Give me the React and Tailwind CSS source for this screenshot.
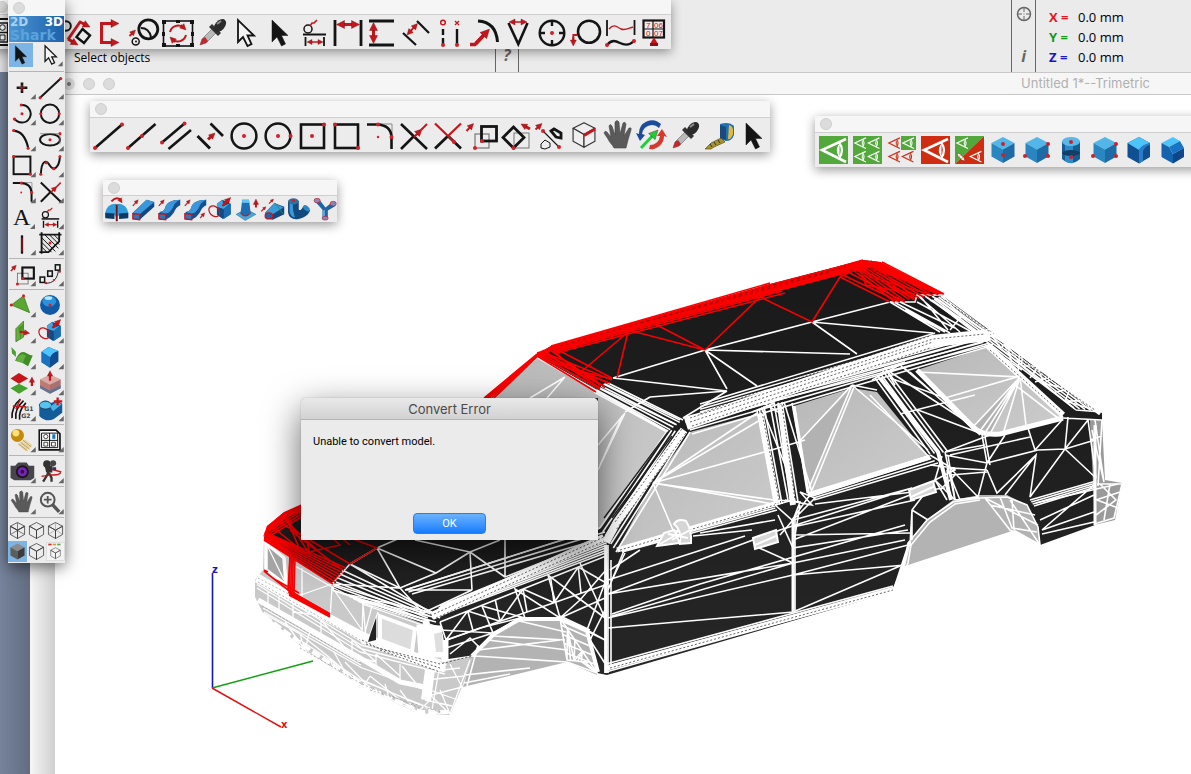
import React from "react";

const K = "#141414";
const R = "#c4161c";

/* ---------- small drawing helpers ---------- */

const Dot = ({ x, y, r = 2 }) => <circle cx={x} cy={y} r={r} fill="#d0202a" />;

const Arrow = ({ from, to, w = 2, head = 6, both = false, color = R }) => {
  const [x1, y1] = from;
  const [x2, y2] = to;
  const len = Math.hypot(x2 - x1, y2 - y1);
  const ux = (x2 - x1) / len;
  const uy = (y2 - y1) / len;
  const tip = (x, y, s) => {
    const bx = x - ux * head * s;
    const by = y - uy * head * s;
    const h = head * 0.5;
    return `M${x} ${y}L${bx - uy * h} ${by + ux * h}L${bx + uy * h} ${by - ux * h}Z`;
  };
  const back = head * 0.6;
  return (
    <g>
      <path
        d={`M${both ? x1 + ux * back : x1} ${both ? y1 + uy * back : y1}L${x2 - ux * back} ${y2 - uy * back}`}
        stroke={color}
        strokeWidth={w}
        fill="none"
      />
      <path d={tip(x2, y2, 1) + (both ? tip(x1, y1, -1) : "")} fill={color} stroke="#7a0d10" strokeWidth="0.4" />
    </g>
  );
};

const Line = ({ d, w = 2.4, c = K, fill = "none", dash }) => (
  <path d={d} stroke={c} strokeWidth={w} fill={fill} strokeDasharray={dash} strokeLinejoin="miter" />
);

const Pointer = ({ fill = K, x = 9, y = 5, s = 1 }) => (
  <path
    transform={`translate(${x} ${y}) scale(${s})`}
    d="M0 0V22L5 17L9.5 26L13.5 24L9.5 15.5H16Z"
    fill={fill}
    stroke={K}
    strokeWidth={fill === K ? 0.5 : 1.8}
  />
);

const Hand = ({ x = 0, y = 0, s = 1 }) => (
  <path
    transform={`translate(${x} ${y}) scale(${s})`}
    d="M11 30C9 26 6 24 5 21L1 15Q2 12 4 14L8 19L6 8Q7 5 9 8L12 17L12 4Q14 1 16 4L17 16L20 5Q22 3 23 6L21 18L26 10Q29 9 28 12L25 22L23 30Z"
    fill="#5a5a5a"
    stroke="#444"
    strokeWidth="0.6"
  />
);

const Dropper = () => (
  <g>
    <path d="M5 30L7 24L17 14L21 18L11 28Z" fill="#b9b9b9" stroke="#777" strokeWidth="0.7" />
    <path d="M5 30L7 24L10 22L13 26L11 28Z" fill="#c3272b" />
    <path d="M14 12L17 9L26 18L23 21Z" fill="#333" />
    <ellipse cx="25" cy="10.500" rx="7.500" ry="4.800" transform="rotate(-48 25 10.500)" fill="#2b2b2b" />
    <path d="M22 9L26 6" stroke="#8d8d8d" strokeWidth="2" />
  </g>
);

const Cube = ({ x = 18, y = 17, s = 1, top = "#4fbdf2", left = "#1a6fb8", right = "#0f4c8a", line = "none", children }) => (
  <g>
    <g transform={`translate(${x} ${y}) scale(${s})`} stroke={line} strokeWidth="1.200" strokeLinejoin="round">
      <path d="M0 -13L11.500 -7L0 -0.500L-11.500 -7Z" fill={top} />
      <path d="M-11.500 -7L0 -0.500V13L-11.500 6.500Z" fill={left} />
      <path d="M11.500 -7L0 -0.500V13L11.500 6.500Z" fill={right} />
    </g>
    {children}
  </g>
);

const Eye = ({ x = 0, y = 0, s = 1, c = "#fff" }) => (
  <g transform={`translate(${x} ${y}) scale(${s})`} fill="none" stroke={c} strokeWidth="2.600">
    <path d="M27 3L3 14L27 26" />
    <path d="M20 6.500Q26 14 20 22.500" strokeWidth="2.200" />
    <path d="M20 9Q16.500 14 20 20Z" fill={c} strokeWidth="1" />
  </g>
);

const Dimension = () => (
  <g>
    <circle cx="11" cy="14" r="4" fill="none" stroke={K} strokeWidth="1.500" />
    <Line d="M13 11L15 8L17 8L20 5" w={1.6} c={R} />
    <Line d="M6 19.500H29" w={2} />
    <Line d="M8.500 22V31M27 22V31" w={1.8} />
    <Arrow from={[10, 27]} to={[26, 27]} both head={5} w={1.5} />
  </g>
);

const Layout = () => (
  <g>
    <path d="M3 4H25L30 9V30H3Z" fill="#fff" stroke={K} strokeWidth="2.200" />
    <path d="M6 8H27V27H6ZM16.500 8V27M6 17.500H27" fill="none" stroke={K} strokeWidth="1.300" />
    <circle cx="11.500" cy="12.500" r="2.800" fill="none" stroke={K} />
    <rect x="20" y="9.500" width="4" height="6" fill="#1976b8" />
    <path d="M9 20H14V25H9ZM19 20H24V25H19Z" fill="none" stroke={K} />
  </g>
);

const Fillet = () => (
  <g>
    <Line d="M16 6H30V19" w={1} c="#888" />
    <Line d="M5 6.500H15Q29.500 7 29.500 20V31" w={2.6} />
    <Dot x={16} y={6.5} />
    <Dot x={29.5} y={19} />
    <Dot x={16} y={19} r={1.2} />
  </g>
);

const Trim = () => (
  <g>
    <Line d="M5 6L31 31M5 31L18 18" w={2.6} />
    <Arrow from={[18, 19]} to={[26, 11]} w={2.2} head={7} />
    <Line d="M25 12L31 6" w={2} c={R} />
  </g>
);

const ScaleCopy = () => (
  <g>
    <rect x="11" y="16" width="14" height="14" fill="none" stroke="#777" strokeWidth="1.200" />
    <rect x="17.500" y="8.500" width="15" height="14.500" fill="none" stroke={K} strokeWidth="2.800" />
    <Arrow from={[2.5, 13]} to={[9.5, 5.5]} w={2} head={6} />
    <Dot x={11} y={30} />
    <Dot x={18} y={23} />
  </g>
);

const Spin = () => (
  <g>
    <path d="M13 10L20 5L31 10V24L21 30L13 25Z" fill="#0f4c85" />
    <path d="M13 10L20 5L22 13L31 9L22 17L13 14Z" fill="#3ea6e3" />
    <path d="M22 17L31 10V24L22 30Z" fill="#1c6cb2" />
    <ellipse cx="9.500" cy="20" rx="8" ry="6" transform="rotate(45 9.500 20)" fill="none" stroke={R} strokeWidth="1.600" />
    <Arrow from={[20, 13]} to={[31, 2]} head={8} w={3} />
  </g>
);

/* ---------- icon sets ---------- */

const editTools = [
  ["Layouts", <Layout />],
  null,
  ["Rotate copy", <g>
    <circle cx="7" cy="11" r="4.800" fill="none" stroke={K} strokeWidth="2" />
    <Line d="M21 7L9 24.500" w={3} c={R} />
    <Arrow from={[20, 6.5]} to={[31, 12]} head={7} w={3} />
    <Arrow from={[9, 24]} to={[19, 30]} head={7} w={3} />
    <Line d="M23.500 14L31 20.500L25 28L17.500 22Z" w={2.4} />
  </g>],
  ["Offset", <g>
    <Line d="M20 8.500H8.500V27.500H20" w={3} c={R} />
    <Arrow from={[16, 8.5]} to={[26, 8.5]} head={8} w={3} />
    <Arrow from={[16, 27.5]} to={[26, 27.5]} head={8} w={3} />
  </g>],
  ["Scale circle", <g>
    <circle cx="21.300" cy="14.300" r="9.500" fill="none" stroke={K} strokeWidth="2.800" />
    <circle cx="8.700" cy="26.500" r="3.500" fill="none" stroke={K} strokeWidth="1.500" />
    <Line d="M14 13Q22 13 24 22" w={2} />
    <circle cx="9" cy="26.500" r="1" fill={K} />
    <Arrow from={[2.5, 21]} to={[8.5, 15]} head={5.5} />
  </g>],
  ["Rotate view", <g>
    <rect x="2.500" y="6" width="29" height="25" fill="none" stroke={K} strokeWidth="1.600" />
    <path d="M1 5h4v4h-4zM29 5h4v4h-4zM1 28h4v4h-4zM29 28h4v4h-4zM15 5h4v3h-4zM15 29h4v3h-4zM1 17h3v4h-3zM30 17h3v4h-3z" fill={K} />
    <Line d="M9 17A8.500 8.500 0 0 1 22 12M25 20A8.500 8.500 0 0 1 12 25" w={2} c={R} />
    <Arrow from={[20, 10]} to={[25, 15]} head={6} />
    <Arrow from={[14, 27]} to={[9, 22]} head={6} />
  </g>],
  ["Pick style", <Dropper />],
  ["Direct select", <Pointer fill="#f4f4f4" />],
  ["Select", <Pointer />],
  ["Dimension", <Dimension />],
  ["Horizontal dimension", <g>
    <Line d="M4 5V31M30 5V31" w={2.8} />
    <Arrow from={[5.5, 9.5]} to={[28.5, 9.5]} both head={8} w={3} />
  </g>],
  ["Vertical dimension", <g>
    <Line d="M4 6H29M4 30H29" w={2.8} />
    <Arrow from={[8.5, 7.5]} to={[8.5, 28.5]} both head={8} w={3} />
  </g>],
  ["Aligned dimension", <g>
    <Line d="M18 6L30 18M4 18L17 30" w={2.2} />
    <Arrow from={[8, 20]} to={[18.500, 8.5]} both head={6} w={2} />
  </g>],
  ["Point dimension", <g>
    <circle cx="10" cy="7.500" r="2.300" fill="none" stroke={R} strokeWidth="1.500" />
    <Line d="M22 6L26 10M26 6L22 10" w={1.3} c={R} />
    <Line d="M10 14V30" w={2.4} dash="6 3" />
    <Line d="M24 14V30" w={2.4} />
    <Dot x={10} y={30} />
    <Dot x={24} y={30} />
  </g>],
  ["Radius dimension", <g>
    <Line d="M11 6Q29 7 30.500 27" w={3} />
    <Line d="M3 29.500H8L16 21" w={3.4} c={R} />
    <Arrow from={[9, 28.5]} to={[22.5, 14]} head={9} w={3.4} />
  </g>],
  ["Angle dimension", <g>
    <Line d="M7.500 8L17.300 29L26.500 8" w={2.6} />
    <Arrow from={[8, 7]} to={[26, 7]} both head={6} w={1.5} />
  </g>],
  ["Center mark", <g>
    <circle cx="17" cy="18" r="12.300" fill="none" stroke={K} strokeWidth="2.400" />
    <Line d="M17 5V11M17 25V31M4 18H10M24 18H30" w={2.4} />
    <Dot x={17} y={18} />
  </g>],
  ["Diameter", <g>
    <circle cx="20" cy="16.700" r="11" fill="none" stroke={K} strokeWidth="2.600" />
    <Line d="M8 20H4.300V27" w={1.8} c={R} />
    <Arrow from={[4.3, 22]} to={[4.3, 31]} head={6} />
  </g>],
  ["Curve compare", <g>
    <Line d="M4 5V21M31.500 5V20" w={1.8} />
    <Line d="M6 14C11 8 14 12 18 14S26 13 30 12" w={1.4} c={R} />
    <Line d="M4 30C9 24 13 26 17 28S26 31 31 26" w={2.4} />
    <Dot x={4} y={30} />
    <Dot x={31} y={26} />
  </g>],
  ["Balloon table", <g>
    <rect x="6.500" y="5.500" width="20.500" height="17" fill="#f5eaea" stroke={K} strokeWidth="2.200" />
    <Line d="M16 6V22M7 14H26" w={1.2} />
    <g fontFamily="Liberation Sans, sans-serif" fontSize="8" fill={R}>
      <text x="9" y="13">7</text>
      <text x="17" y="13">06</text>
      <text x="9" y="21">0</text>
      <text x="17" y="21">07</text>
    </g>
    <path d="M17 22L21 29H13Z" fill={R} />
    <path d="M13 28H21V31H13Z" fill="#8c1114" />
  </g>],
];

const drawTools = [
  ["Line", <g><Line d="M5 30L32 6.500" w={2.6} /><Dot x={5} y={30} /><Dot x={32} y={6.5} /></g>],
  ["Mid line", <g><Line d="M4 30L31.500 6" w={2.6} /><Dot x={4} y={30} /><Dot x={18} y={18} /></g>],
  ["Parallel lines", <g><Line d="M4 24.500L26.500 5.500M10.500 31L33 12" w={2.6} /><Dot x={4} y={24.5} /><Dot x={26.5} y={5.5} /></g>],
  ["Perpendicular", <g><Line d="M5.500 18L18 30.500" w={3} /><Line d="M18.500 5.500L31 18" w={2.6} /><Arrow from={[16, 21.5]} to={[23, 15]} head={6} w={3} /></g>],
  ["Circle", <g><circle cx="18" cy="18" r="12.400" fill="none" stroke={K} strokeWidth="2.500" /><Dot x={18} y={18} /></g>],
  ["Circle by radius", <g><circle cx="18" cy="18" r="12.400" fill="none" stroke={K} strokeWidth="2.500" /><Dot x={18} y={18} /><Dot x={30.5} y={18} /></g>],
  ["Center rectangle", <g><rect x="7" y="6.500" width="23" height="23.500" fill="none" stroke={K} strokeWidth="2.600" /><Dot x={18} y={18} /><Dot x={30} y={6.5} /></g>],
  ["Rectangle", <g><rect x="7" y="6.500" width="23" height="23.500" fill="none" stroke={K} strokeWidth="2.600" /><Dot x={7} y={6.5} /><Dot x={30} y={30} /></g>],
  ["Fillet", <Fillet />],
  ["Trim", <Trim />],
  ["Split", <g><Line d="M18 18L31 30.500M18 18L5 30.500" w={2.8} /><Line d="M18 18L5 5.500M18 18L31 5.500M18 18L24 24" w={2.2} c={R} /><Dot x={24} y={24} /></g>],
  ["Move", <ScaleCopy />],
  ["Rotate", <g>
    <rect x="16" y="15" width="15" height="15" fill="none" stroke="#777" />
    <Line d="M15.500 9L26 19.500L15.500 30L5 19.500Z" w={2.8} />
    <Arrow from={[32, 11]} to={[23, 6]} head={6} w={3} />
    <Dot x={15.5} y={30} />
  </g>],
  ["Mirror", <g>
    <Line d="M11 13L27 29" w={1.1} />
    <Line d="M19 13L22 11L29 15L29 20L24 19Z" w={2.8} />
    <Line d="M9 26L13 22L18 25V29L13 31L9 30Z" w={1} />
    <Arrow from={[3.5, 11.5]} to={[10, 5.5]} head={6} />
    <Dot x={11} y={13} />
    <Dot x={27} y={29} />
  </g>],
  ["Edge", <g><Cube top="#efefef" left="#efefef" right="#efefef" line="#333" s={0.95} /><Line d="M18 17.500L29 11" w={3} c={R} /></g>],
  ["Pan", <Hand x={3} />],
  ["Orbit", <g>
    <path d="M27 6A13 13 0 0 0 5 16L2 15L6 23L11 17L8 16A10 10 0 0 1 25 10Z" fill="#1d4b9c" />
    <path d="M15 31A13 13 0 0 0 30 18L33 19L28 11L23 18H26A10 10 0 0 1 16 27Z" fill="#d63a2e" />
    <Arrow from={[7, 30]} to={[24, 12]} head={9} w={3} color="#1fce3a" />
  </g>],
  ["Pick style", <Dropper />],
  ["Measure", <g>
    <path d="M18 6Q27 3 32 8V17Q30 23 24 23L18 21Z" fill="#2470b5" />
    <path d="M18 7L24 9V22L18 20Z" fill="#1b4a7c" />
    <path d="M27 7Q32 8 31 16Q29 22 26 21Z" fill="#e2b93a" />
    <path d="M19 20L23 24L12 29L9 31H3L9 25Z" fill="#a8922c" stroke="#5e5011" strokeWidth="0.700" />
    <path d="M8 26l2 3M12 24l2 3M16 22l2 3" stroke="#333" />
  </g>],
  ["Select", <Pointer x={10} />],
];

const solid = { top: "#52b7e8", left: "#2a86c0", right: "#1d6ba4" };

const viewTools = [
  ["Show", <g><rect x="4" y="3" width="29" height="28" fill="#52a83a" /><Eye x={4} y={3} /></g>],
  ["Show all", <g>
    <rect x="4" y="3" width="29" height="28" fill="#52a83a" />
    <Eye x={4.5} y={3.5} s={0.46} /><Eye x={18} y={3.5} s={0.46} /><Eye x={4.5} y={17} s={0.46} /><Eye x={18} y={17} s={0.46} />
  </g>],
  ["Show only", <g>
    <rect x="18" y="3" width="15" height="14" fill="#52a83a" />
    <Eye x={4.5} y={3.5} s={0.46} c="#d02c12" /><Eye x={18.5} y={3.5} s={0.46} /><Eye x={4.5} y={17} s={0.46} c="#d02c12" /><Eye x={18} y={17} s={0.46} c="#d02c12" />
  </g>],
  ["Hide", <g><rect x="4" y="3" width="29" height="28" fill="#d02c12" /><Eye x={4} y={3} /></g>],
  ["Swap visibility", <g>
    <path d="M4 3H33L4 31Z" fill="#52a83a" /><path d="M33 3V31H4Z" fill="#d02c12" />
    <Eye x={4.5} y={3.5} s={0.46} /><Eye x={18} y={17} s={0.46} />
    <Arrow from={[6, 20]} to={[14, 28]} both head={4} w={2} color="#fff" />
  </g>],
  ["Face center", <Cube {...solid}><Dot x={18} y={11} /><Dot x={18} y={22} /></Cube>],
  ["Vertices", <Cube {...solid}><Dot x={29} y={11} /><Dot x={6} y={23} /><Dot x={29} y={23} /></Cube>],
  ["Cylinder", <g>
    <path d="M9 8V26Q18 34 27 26V8Z" fill="#175d94" />
    <path d="M12 10V28Q16 31 20 30V10Z" fill="#2c8cca" />
    <ellipse cx="18" cy="8.500" rx="9" ry="4.500" fill="#59b9e8" />
    <ellipse cx="18" cy="20" rx="9" ry="3" fill="#123f66" />
    <Dot x={18} y={9} /><Dot x={18} y={24} />
  </g>],
  ["Edges", <Cube {...solid}><Dot x={29} y={11} /><Dot x={6} y={23} /><Dot x={29} y={23} /></Cube>],
  ["Blend edge", <g>
    <path d="M18 4L29 10V24L18 30.500L6.500 24V10Z" fill="#0f4f92" />
    <path d="M18 4L29 10Q21 12 18 17L6.500 10Z" fill="#4dc4fb" />
    <path d="M29 10Q20 12 18 17V30.500L22 28V18Q24 13 29 12Z" fill="#2a7cc8" />
  </g>],
  ["Chamfer edge", <g>
    <path d="M18 4L25 8L14 14L6.500 10Z" fill="#4dc4fb" />
    <path d="M6.500 10L14 14L18 21V30.500L6.500 24Z" fill="#1464ad" />
    <path d="M25 8L29 15L18 21L14 14Z" fill="#1973c4" />
    <path d="M29 15V24L18 30.500V21Z" fill="#0d478a" />
  </g>],
  ["Shell", <Cube {...solid} />],
];

const Bar = ({ curve = false, extra = false }) => (
  <g>
    {curve ? (
      <g>
        <path d="M6 21Q13 20 14 13Q17 8 24 6L33 5V12Q27 15 25 21Q21 28 14 31H6Z" fill="#154f92" />
        <path d="M6 21Q13 20 14 13Q17 8 24 6L33 5Q25 9 24 14Q20 22 14 23Z" fill="#3a97dc" />
      </g>
    ) : (
      <g>
        <path d="M5 22L23 5L33 8V14L14 31L5 30Z" fill="#12477f" />
        <path d="M5 22L23 5L33 8L14 24Z" fill="#3a97dc" />
      </g>
    )}
    <path d="M5 23L14 24V31L5 30Z" fill="#2d74b8" stroke={R} strokeWidth="1.600" />
    <Arrow from={[5, 13]} to={[12, 5]} head={5} w={1.5} />
    {extra && <Arrow from={[25, 29]} to={[31, 22]} head={5} w={1.5} />}
  </g>
);

const solidTools = [
  ["Revolve", <g>
    <path d="M3 22Q5 10 17 10V28Q14 20 3 28ZM33 22Q31 10 19 10V28Q22 20 33 28Z" fill="#2f9ddc" />
    <path d="M3 22L15 23V30L3 29ZM33 22L21 23V30L33 29Z" fill="#0c3a66" />
    <Line d="M18 11V33" w={2.6} c="#7a1014" />
    <Line d="M11 7Q17 0 23 5" w={2.6} c={R} />
    <Arrow from={[21, 3]} to={[25, 9]} head={6} />
  </g>],
  ["Extrude", <Bar />],
  ["Sweep", <Bar curve />],
  ["Sweep two rails", <Bar curve extra />],
  ["Lathe", <Spin />],
  ["Boss", <g>
    <path d="M4 24L17 17L30 24L16 32Z" fill="#43a8e2" stroke="#155" strokeWidth="0.500" />
    <path d="M10 22Q16 30 23 22L21 5H12Z" fill="#1c6fb3" />
    <path d="M12 5H21V9H12Z" fill="#62c5f4" />
    <Line d="M10 22Q16 30 23 22" w={1.5} c={R} />
    <Arrow from={[30, 15]} to={[30, 4]} head={7} w={2.6} />
  </g>],
  ["Loft", <g>
    <path d="M8 22L20 9L33 14V24L18 31L11 29Z" fill="#12477f" />
    <path d="M8 22L20 9L32 15L18 24Z" fill="#3b9bdb" />
    <Line d="M21 9L32 24" w={1.2} c="#2c8a5a" />
    <ellipse cx="13" cy="26" rx="5" ry="4" fill="#1f65a8" stroke={R} strokeWidth="1.600" />
    <Arrow from={[3, 20]} to={[9, 14]} head={4} w={1.5} />
    <Arrow from={[13, 10]} to={[19, 4]} head={4} w={1.5} />
  </g>],
  ["Pipe", <g>
    <path d="M4 7V22Q6 32 18 30Q29 28 33 19L24 13Q21 20 18 18V7Z" fill="#124a80" />
    <path d="M6 9V21Q8 28 13 28Q10 20 10 9Z" fill="#3c99d8" />
    <ellipse cx="11" cy="7" rx="7" ry="4" fill="#336fa2" />
    <ellipse cx="28" cy="16" rx="3" ry="5" transform="rotate(-50 28 16)" fill="#2f86c4" />
    <Dot x={11} y={6} />
  </g>],
  ["Branch", <g>
    <path d="M5 7L15 18V29H22V19L32 13L28 8L19 15L11 5Z" fill="#1f62a6" />
    <path d="M16 19V29H18V18Z" fill="#69bdf0" />
    <ellipse cx="8" cy="6" rx="4" ry="3" fill="#8a86b8" stroke={R} strokeWidth="0.800" />
    <ellipse cx="29" cy="10" rx="4" ry="3" fill="#8a86b8" stroke={R} strokeWidth="0.800" />
    <ellipse cx="18.500" cy="29" rx="4" ry="2.500" fill="#8a86b8" stroke={R} strokeWidth="0.800" />
  </g>],
];

/* icons of the main palette share a 34 unit grid */
const paletteGroups = [
  [
    ["Point", <g><Line d="M17 11V25M10 18H24" w={3.4} /><Line d="M17 14V22M13 18H21" w={1.5} c={R} /></g>],
    ["Line", <g><Line d="M4 31L31 6" w={2.6} /><Dot x={4} y={31} /><Dot x={31} y={6} /></g>],
    ["Arc", <g><Line d="M17 6.500A11.500 11.500 0 1 1 7 24" w={2.6} /><Dot x={16} y={6.5} /><Dot x={7} y={25} /><Dot x={17} y={18} /></g>],
    ["Circle", <g><circle cx="17" cy="18" r="12" fill="none" stroke={K} strokeWidth="2.600" /><Dot x={5} y={18} /><Dot x={29} y={18} /></g>],
    ["Conic", <g><Line d="M6 6Q20 7 25 28" w={2.8} /><Dot x={6} y={6} /><Dot x={25} y={29} /></g>],
    ["Ellipse", <g><ellipse cx="17" cy="18" rx="13" ry="7.500" fill="none" stroke={K} strokeWidth="2.600" /><Line d="M4 10H30V24" w={1} c="#888" /><Dot x={17} y={18} /><Dot x={30} y={10} /></g>],
    ["Rectangle", <g><rect x="6" y="6" width="22" height="23" fill="none" stroke={K} strokeWidth="2.600" /><Dot x={6} y={6} /><Dot x={28} y={29} /></g>],
    ["Spline", <g><Line d="M5 29C6 10 12 10 17 18S29 20 30 6" w={2.6} /><Dot x={5} y={29} /><Dot x={12} y={14} /><Dot x={22} y={22} /><Dot x={30} y={6} /></g>],
    ["Fillet", <Fillet />],
    ["Trim", <Trim />],
    ["Text", "A"],
    ["Dimension", <Dimension />],
    ["Divider", <g><Line d="M17 7V31" w={3} /><Line d="M17 10V28" w={1.4} c={R} /></g>],
    ["Hatch", <g>
      <path d="M6 6H29V15L16 29H6Z" fill="#e6e6e6" />
      <Line d="M6 10L24 28M6 16L19 29M6 22L13 29M10 6L28 24M16 6L29 19M22 6L29 13" w={1.3} />
      <Line d="M3 6H32M6 3V31M29 3V15L15 29H3" w={2.4} />
      <Dot x={17} y={17} />
    </g>],
  ],
  [
    ["Move", <ScaleCopy />],
    ["Array", <g>
      <Line d="M10 29C22 30 27 22 28 12" w={1.2} />
      <rect x="4" y="21" width="6" height="7" fill="#eee" stroke={K} strokeWidth="2" />
      <rect x="14" y="13" width="6" height="7" fill="#eee" stroke={K} strokeWidth="2" />
      <rect x="24" y="5" width="6" height="7" fill="#eee" stroke={K} strokeWidth="2" />
      <Dot x={12} y={29} r={1.5} /><Dot x={22} y={25} r={1.5} /><Dot x={30} y={14} r={1.5} />
    </g>],
  ],
  [
    ["Plane", <g><path d="M3 17L19 5L27 27Z" fill="#5aa632" stroke="#3f7a20" /><Dot x={3} y={17} /><Dot x={19} y={5} /></g>],
    ["Sphere", <g><circle cx="17" cy="17" r="13" fill="#1159a3" /><ellipse cx="16" cy="12" rx="9" ry="7" fill="#2b93dd" /><ellipse cx="15" cy="8" rx="5" ry="2.500" fill="#bfe7fb" /><Dot x={17} y={17} /></g>],
    ["Surface", <g><path d="M9 14L19 4V25L9 31Z" fill="#67b13b" stroke="#2f7a1b" /><path d="M12 13L15 28L19 8" fill="#2f7a1b" opacity=".5" /><Arrow from={[14, 18]} to={[27, 20]} head={7} w={2.5} /></g>],
    ["Extrude", <Spin />],
    ["Cover surface", <g><path d="M3 4L9 10V17L4 12Z" fill="#4c9f2c" /><path d="M8 22Q14 6 23 12Q28 15 31 15L25 29Q18 24 8 22Z" fill="#3f8d24" /><path d="M9 22Q14 10 22 15L18 25Z" fill="#7cc452" opacity=".6" /></g>],
    ["Solid block", <g>
      <path d="M6 10L15 4L28 9V23L17 31L6 24Z" fill="#0e4b90" />
      <path d="M6 10L15 4L28 9Q19 11 17 18Z" fill="#4dc4fb" />
      <path d="M6 10L17 17V31L6 24Z" fill="#1a73c0" />
    </g>],
    ["Stitch", <g><path d="M13 4L25 11L13 18L2 11Z" fill="#c5161c" /><path d="M13 18L25 24L13 31L2 24Z" fill="#46a02c" /><Arrow from={[30, 21]} to={[30, 9]} head={7} w={3} /></g>],
    ["Push face", <g><path d="M17 6L31 12L17 19L4 12Z" fill="#d9a9a4" /><path d="M4 12L17 19V31L4 24Z" fill="#c07a74" /><path d="M31 12L17 19V31L31 24Z" fill="#ad6f70" /><path d="M4 20L17 27L31 20V24L17 31L4 24Z" fill="#48749f" opacity=".8" /><Arrow from={[17, 14]} to={[17, 1]} head={7} w={3} /></g>],
    ["Blend curves", <g>
      <Line d="M4 29Q3 14 15 4M9 30Q7 17 19 6M14 31Q12 20 22 9" w={2.2} />
      <Line d="M5 13L22 14M9 17L15 4" w={1.8} c={R} />
      <g fontFamily="DejaVu Sans, sans-serif" fontSize="8" fontWeight="bold" fill="#444">
        <text x="20" y="20">G1</text>
        <text x="16" y="29">G2</text>
      </g>
    </g>],
    ["Boolean add", <g><path d="M3 11Q10 2 18 9L27 6L33 10V22L22 30Q12 35 3 26Z" fill="#135c99" /><ellipse cx="11" cy="12" rx="8" ry="5" fill="#59c2ee" stroke="#123" strokeWidth="0.800" /><path d="M17 14L27 7L32 11L21 20Z" fill="#4bb2e4" /><Line d="M27 2V12M22 7H33" w={3} c={R} /></g>],
  ],
  [
    ["Render material", <g><path d="M12 23L21 16L31 24L22 32Z" fill="#e6d29c" opacity=".8" /><Line d="M12 22L24 31M15 20L27 29M18 17L29 26" w={1} c="#b8923a" /><circle cx="11" cy="11" r="8.500" fill="#c48a0a" /><circle cx="9" cy="8" r="4.500" fill="#ffe07a" /></g>],
    ["Layouts", <Layout />],
  ],
  [
    ["Snapshot", <g><path d="M2 10H8L12 6H23L26 10H33V26L28 29H7L2 26Z" fill="#48464b" /><circle cx="17.500" cy="18" r="8.500" fill="#1c1522" /><circle cx="17.500" cy="18" r="6" fill="#7a25b8" /><circle cx="17.500" cy="18" r="2.500" fill="#32104c" /></g>],
    ["Walk through", <g><circle cx="13" cy="8" r="5" fill="#333" /><circle cx="21" cy="7" r="4" fill="#444" /><path d="M10 10H20V19H12Z" fill="#333" /><Line d="M16 16L13 23L8 31M16 20L19 26V31" w={3} c="#333" /><Line d="M20 15L31 18Q31 23 18 22L6 24" w={1.8} c={R} /><rect x="20" y="12" width="5" height="4" fill="#432b66" /></g>],
  ],
  [
    ["Pan", <Hand x={2} />],
    ["Zoom", <g><circle cx="14" cy="14" r="9" fill="none" stroke="#555" strokeWidth="2.600" /><Line d="M14 9V19M9 14H19" w={2.4} c="#555" /><Line d="M20 20L29 30" w={4.4} c="#555" /></g>],
  ],
];

const wire = { top: "none", left: "none", right: "none", line: "#333" };
const shadeModes = [
  ["Wireframe", <g><Cube x={17} s={1.1} {...wire} /><Line d="M17 3V31M4.500 10L29.500 24M29.500 10L4.500 24" w={1.2} c="#444" /></g>],
  ["Hidden line", <Cube x={17} s={1.1} {...wire} />],
  ["Dimmed hidden line", <g><Cube x={17} s={1.1} {...wire} /><Line d="M17 3V16M17 16L4.500 24M17 16L29.500 24" w={1} c="#888" /></g>],
  ["Shaded", <Cube x={17} s={1.1} top="#8b8b8b" left="#5d5d5d" right="#3b3b3b" />],
  ["Shaded outline", <Cube x={17} s={1.1} {...wire} />],
  ["Display options", <g><rect x="1" y="1" width="32" height="32" fill="#f3f3f3" stroke="#d0d0d0" /><path d="M4 3h6v3h-6z" fill="#c33" /><path d="M12 3h6v3h-6z" fill="#d93" /><path d="M20 3h6v3h-6z" fill="#5a5" /><Cube x={17} y={20} s={0.75} {...wire} /></g>],
];

/* ---------- wireframe model ---------- */

const lerp = (a, b, t) => [a[0] + (b[0] - a[0]) * t, a[1] + (b[1] - a[1]) * t];
const seg = (a, b) => `M${a[0].toFixed(1)} ${a[1].toFixed(1)}L${b[0].toFixed(1)} ${b[1].toFixed(1)}`;

// n lines running from edge a-b to edge c-d
const fan = (a, b, c, d, n) => {
  let out = "";
  for (let i = 0; i <= n; i++) out += seg(lerp(a, b, i / n), lerp(c, d, i / n));
  return out;
};

// triangulated quad, corners a b c d in order
const mesh = (a, b, c, d, cols, rows) => {
  const p = (i, j) => lerp(lerp(a, b, i / cols), lerp(d, c, i / cols), j / rows);
  let out = "";
  for (let i = 0; i <= cols; i++) {
    for (let j = 0; j <= rows; j++) {
      if (i < cols) out += seg(p(i, j), p(i + 1, j));
      if (j < rows) out += seg(p(i, j), p(i, j + 1));
      if (i < cols && j < rows) out += (i + j) % 2 ? seg(p(i, j), p(i + 1, j + 1)) : seg(p(i + 1, j), p(i, j + 1));
    }
  }
  return out;
};

const whiteWires = [
  // roof skin
  "M613 378L705 350L812 322L890 302L915 302L917 295L943 295M705 350L850 354M705 350L727 389M705 350L757 386M812 322L933 333M812 322L857 354M613 378L727 391L650 397M727 391L683 418M605 384L680 420M650 397L625 412M600 388L675 424",
  fan([606, 382], [594, 392], [683, 420], [667, 432], 5),
  "M890 302L940 332M894 302L950 333M900 302L955 328M917 295L960 332M917 302L970 331M925 296L975 331M932 296L985 331M905 310L945 332M920 296L948 330M930 300L960 318L950 330M943 296L962 318",
  // rear roof corner and tailgate
  fan([943, 295], [932, 300], [1102, 412], [1074, 408], 5),
  mesh([990, 332], [1102, 412], [1076, 410], [1000, 348], 7, 1),
  "M985 345L1022 370M993 336L1020 352L1040 365L1030 378M1020 350L1018 372M1040 365L1100 412M1040 365L1052 376L1035 382M1003 340L1012 362",
  // hood
  "M350 564L377 548L400 538M377 548L400 588L333 584M377 548L436 573L470 552L415 540M470 552L436 573L400 588M470 552L505 577M470 552L472 590M470 552L500 540M505 577L505 540M505 577L598 540M405 590L600 528M332 584L350 564L400 588M405 590L472 590L423 613L400 588M423 613L332 584M350 564L440 618M332 590L423 619",
  fan([342, 570], [332, 590], [432, 612], [425, 622], 5),
  fan([405, 590], [412, 594], [600, 528], [610, 536], 2),
  fan([440, 606], [432, 618], [606, 538], [608, 552], 6),
  // front fender
  mesh([440, 622], [606, 556], [608, 584], [446, 640], 6, 1),
  "M447 660L473 656L493 633L520 618L560 618L587 630L597 673M440 630L493 633L482 606L525 618L515 589L560 618L548 575L605 618L580 563M446 648L493 633M560 618L605 598M560 618L605 640L587 630M587 630L606 580M480 628L520 618M447 640L480 628M450 654L470 638L482 650M555 580L580 600L606 570M580 600L560 618",
  // front wheel well
  mesh([560, 618], [597, 673], [585, 662], [567, 660], 5, 1),
  fan([560, 616], [567, 662], [590, 630], [597, 673], 5),
  "M478 650L560 640M475 656L567 662M488 640L567 650M465 675L530 668M464 683L510 674M493 636L565 640M515 620L566 632M478 645L467 686",
  // a-pillar
  fan([668, 430], [690, 432], [600, 528], [616, 552], 6),
  // roof rails
  fan([683, 418], [692, 434], [993, 332], [987, 347], 4),
  fan([700, 404], [700, 420], [935, 333], [993, 344], 6),
  // front door glass
  "M653 483L757 413M653 483L762 419M653 483L775 449L805 440M653 483L774 500M653 483L773 504M653 483L673 530",
  // b pillar
  fan([757, 410], [764, 406], [775, 506], [782, 504], 3),
  fan([770, 404], [782, 402], [788, 500], [798, 502], 3),
  "M762 408L792 482M784 402L812 492M792 403L808 493M775 505L792 520L812 492M778 500L800 502L793 520L780 535M752 412L775 403L762 402L778 412M785 500L812 505L800 492L815 498L793 520M778 515L793 548L800 505M775 505L793 500",
  // rear door glass
  "M852 385L798 443M852 385L808 490M854 387L812 490M852 385L928 450M852 385L877 390M870 395L928 456",
  // c pillar
  fan([875, 378], [885, 368], [930, 454], [948, 452], 4),
  fan([900, 365], [910, 372], [973, 427], [980, 435], 2),
  "M890 372L975 427M890 378L945 398L1020 376M900 414L975 395M918 410L985 435M945 452L990 435M945 452L955 500M872 380L905 362L885 368L895 385",
  // quarter glass
  "M917 372L1020 377M1020 377L973 427M1020 377L980 431M1020 377L985 433M1020 377L990 434M1020 377L1003 434M1020 377L1026 425M1020 377L1063 417M1015 385L1058 418",
  // rear quarter panel
  "M945 452L985 445M945 455L987 463L1038 450L1065 449L1095 440M982 435L987 463M1065 449L1096 478M987 463L978 497L950 468L987 470M987 470L997 493L1036 455L1030 497L1065 449L1068 417M987 463L1005 435M1035 450L1027 425M1035 450L1062 420M1065 449L1088 420M985 437L990 465M950 455L1030 437M950 475L987 472M947 468L960 500M1005 495L1036 455M955 500L978 497M1088 420L1096 478M1063 418L1102 420",
  fan([1030, 500], [1034, 506], [1096, 481], [1096, 487], 3),
  "M1042 530L1094 485M1042 530L1094 512M1042 534L1094 522M1040 520L1094 495M1036 503L1118 484",
  // rear bumper corner
  "M1097 484L1122 484L1114 518L1094 524M1097 500L1118 508M1100 484L1116 500L1096 515M1110 484L1104 520M1120 492L1096 500M1095 420L1104 482L1092 430M1102 420L1098 486M1090 440L1102 436",
  // doors
  fan([620, 548], [622, 552], [772, 504], [777, 510], 3),
  fan([812, 494], [814, 500], [928, 456], [938, 463], 3),
  "M608 580L745 536M608 594L793 563L793 548L908 530M608 594L780 530L912 488M608 594L753 540M612 616L793 563L905 540M608 618L793 575L908 545M612 614L700 584L905 525M608 628L793 612M793 575L905 565M793 612L900 566M793 535L910 533M793 540L910 495M815 504L945 488M793 563L755 546M793 520L912 488M793 527L915 500M625 553L612 580M693 536L752 530M775 520L700 533M640 550L610 570",
  fan([606, 664], [606, 672], [893, 586], [893, 591], 3),
  "M605 545V673M608 545V673M611 560V668M793 520V612M795 520V612M625 548L608 590M605 610L590 640L606 665",
  "M930 455L955 470L935 480L955 500M942 456L935 480M930 465L955 468M948 455L955 500M940 490L955 475",
  // rear arch
  "M892 592L905 563L908 543L927 520L953 502L980 498L1007 497L1027 505L1038 527L1040 545M896 590L908 563L911 545L930 522L955 504L980 500M910 545L912 510L935 480L947 500M912 510L928 520M947 470L950 500M912 510V540",
  "M985 498L1010 530L1040 545M1000 497L1012 528L1037 532M1010 500L1040 545M985 498L1038 525M990 505L1035 515M1012 500L1014 530",
];

const bumperWires = [
  // lamps and grille
  "M295 566L332 587L330 619L295 597ZM332 587L363 603L362 635L330 620M302 568V597M298 596L332 584M332 587L362 630M363 603L366 640M372 606L364 636M378 612L368 640",
  fan([345, 594], [362, 604], [430, 612], [442, 632], 4),
  // upper strip
  fan([257, 574], [257, 588], [362, 638], [360, 652], 4),
  fan([362, 638], [360, 652], [447, 662], [445, 674], 4),
  // cells
  "M268 592V607M279 596V612L293 619M293 604V619L310 630M310 614L293 612M321 620V636M321 620L352 656M352 640V656M352 640L376 662L352 656M376 654V670M376 654L400 676M400 664V682L376 668M402 666L418 686",
  // lower lip
  fan([262, 604], [264, 612], [360, 662], [362, 668], 2),
  "M263 613L300 634L305 650M285 622L305 650L310 630M300 634L330 658L334 670M330 658L363 687L370 676M334 652L345 672M345 662L372 690M370 676L400 700L417 713M385 684L390 700M400 690L417 713L430 700M362 668L425 690L450 714",
  "M425 672L460 668M425 680L465 676M430 690L458 700M440 664L432 710M450 664L462 687L428 696M470 660L450 714L440 690M425 700L452 706",
  "M280 632L340 676L420 713M300 640L360 680L430 708M363 680L440 714",
];

const redWires = [
  fan([537, 353], [553, 349], [863, 260], [872, 266], 9),
  fan([551, 346], [556, 353], [770, 283], [785, 293], 5),
  fan([537, 354], [544, 350], [484, 398], [494, 398], 4),
  fan([543, 352], [537, 356], [612, 380], [596, 392], 4),
  "M628 332L575 377M628 332L617 378M628 330L705 350L655 324M705 350L760 297L812 322L840 277M550 350L600 385M556 349L612 378M565 367L610 383M553 350L575 370L612 379M537 356L590 376L605 388M545 352L600 388",
  fan([848, 266], [880, 263], [895, 302], [943, 294], 10),
  "M840 277L890 302M843 275L900 302M848 272L905 302M860 268L915 300M870 262L915 298M882 262L944 294M840 277L870 262L862 275L930 294M858 264L866 285L915 294",
  // hood corner
  fan([302, 505], [310, 512], [267, 527], [266, 538], 4),
  fan([265, 532], [264, 540], [346, 568], [333, 584], 7),
  "M285 515L310 555L302 520L377 548L350 564M310 540L350 564M285 515L300 550L265 532M270 525L305 553L340 545L300 510M276 520L350 564M302 505L350 545M264 538L290 556L288 590L264 571M285 520L330 562M290 530L340 568",
  fan([290, 556], [295, 560], [289, 590], [294, 594], 3),
  fan([264, 570], [288, 590], [268, 572], [330, 614], 2),
  fan([288, 590], [289, 595], [330, 614], [330, 617], 3),
];

const glass = [
  "537,357 667,432 598,530 598,398 490,398",
  "690,432 757,414 774,503 617,550 653,483",
  "794,406 852,388 877,392 928,455 808,493",
  "917,370 987,347 1020,375 1063,417 990,435 973,427",
];

const CarModel = () => (
  <svg className="block shrink-0" width="1136" height="679" viewBox="55 95 1136 679" role="img" aria-label="Wireframe model">
    <defs>
      <linearGradient id="glass" x1="0" y1="0" x2="1" y2="1">
        <stop offset="0" stopColor="#b8b8b8" />
        <stop offset="1" stopColor="#cccccc" />
      </linearGradient>
      <linearGradient id="body" x1="0" y1="0" x2="0" y2="1">
        <stop offset="0" stopColor="#191919" />
        <stop offset="1" stopColor="#262626" />
      </linearGradient>
    </defs>

    {/* wheel wells and bumpers */}
    <g fill="#b3b3b3">
      <path d="M473 653L463 687L567 662L597 675L590 630L555 615L515 615Z" />
      <path d="M905 566L1015 530L1042 545L1035 505L1000 492L950 498L915 525Z" />
      <path d="M1090 420L1102 420L1105 480L1122 483L1115 520L1094 525Z" fill="#9a9a9a" />
      <path d="M264 537L263 570L255 580V597L263 613L305 650L363 687L417 713L450 715L462 687L473 657L447 640L430 615L332 584Z" fill="#c9c9c9" />
    </g>

    {/* body */}
    <g fill="url(#body)">
      <path d="M537 354L551 346L770 284L863 260L880 262L943 295L993 332L1102 412V420H1090L1095 525L1040 545L1038 527L1027 505L1007 495H980L953 500L927 520L908 543L892 592L607 675L597 673L587 630L560 618H520L493 633L473 657L447 660L440 630L332 590L350 564L598 470L667 430Z" />
      <path d="M301 505L283 513L267 527L264 538L332 584L440 626L600 560V500Z" />
    </g>
    <path d="M484 398L537 354L667 430L598 534H480Z" fill="#222" />
    {glass.map((points) => (
      <polygon key={points} points={points} fill="url(#glass)" />
    ))}
    <path d="M798 443L852 388L808 490Z" fill="#b2b2b2" />
    <path d="M1020 377L973 427L990 434Z" fill="#b2b2b2" />

    {/* dense white strips */}
    <g stroke="#fff" fill="none">
      <path d="M686 424L760 399L933 341L990 335" strokeWidth="12" />
      <path d="M684 430L617 522L606 542" strokeWidth="8" />
      <path d="M760 414L777 503M780 405L793 505" strokeWidth="6" />
      <path d="M880 378L938 452L951 500" strokeWidth="4" />
      <path d="M617 550L775 504M808 495L930 457M607 668L893 590" strokeWidth="5" />
      <path d="M794 406L808 493" strokeWidth="3" />
      <path d="M917 370L973 427Q982 436 1000 434L1063 418" strokeWidth="5" />
      <path d="M987 345L1063 415" strokeWidth="6" />
      <path d="M994 334L1100 414" strokeWidth="3" />
      <path d="M432 616L604 538" strokeWidth="8" />
      <path d="M793 520V612M606 545V673M1095 425V525" strokeWidth="3" />
      <path d="M537 357L667 431M537 357L491 397" strokeWidth="2.500" />
      <path d="M445 640V662M426 620L430 668M362 640L440 664" strokeWidth="7" />
      <path d="M257 578L300 603L360 635L410 658L445 668" strokeWidth="9" />
      <path d="M258 600L300 624L360 658L400 682L430 688" strokeWidth="5" />
      <path d="M430 670L426 700" strokeWidth="10" />
      <path d="M264 616L310 650L363 685L420 712H448" strokeWidth="4" strokeDasharray="9 3" />
      <path d="M472 656L494 634L520 619H560L587 631L598 672" strokeWidth="4" />
    </g>
    <g fill="none" stroke="#fff" strokeWidth="1.600">
      {whiteWires.map((d, i) => (
        <path key={i} d={d} />
      ))}
    </g>
    <g fill="none" stroke="#fff" strokeWidth="1.300">
      {bumperWires.map((d, i) => (
        <path key={i} d={d} />
      ))}
    </g>

    {/* windshield creases */}
    <path d="M565 377L530 398M565 377L547 398M625 413L598 445M625 413L598 470M622 416L600 465" stroke="#fff" strokeWidth="1.500" />

    {/* dark stitching over the white strips */}
    <g stroke="#222" strokeWidth="0.700" strokeDasharray="2 2" fill="none">
      <path d="M690 418L760 395L933 339L985 334M690 422L760 399L933 342M692 426L760 403L930 348M700 414L760 391L930 336" />
      <path d="M684 426L615 522M688 430L616 530M762 412L779 500M782 405L795 500" />
      <path d="M620 550L775 505M610 668L893 590M434 614L604 537M436 618L604 541" />
      <path d="M1000 345L1095 410M990 350L1060 412M945 300L990 332" />
      <path d="M362 640L378 648L440 664L472 656M366 644L440 668M380 650L440 672" />
    </g>
    <g stroke="#999" strokeWidth="0.700" strokeDasharray="2 2" fill="none">
      <path d="M258 582L360 640M258 578L300 600M262 606L362 664M300 648L362 684L420 708M370 690L440 712" />
    </g>
    <path d="M668 432L604 518M672 436L612 518" stroke="#222" strokeWidth="1.400" />
    <path d="M371 632L376 618V640L368 642Z" fill="#222" />

    {/* headlights, mirror and handles */}
    <path d="M380 616L415 629L412 652L380 640Z" fill="#dcdcdc" stroke="#fff" strokeWidth="4" />
    <path d="M418 626L440 627L445 656L420 656Z" fill="#fff" stroke="#fff" strokeWidth="3" />
    <path d="M434 634L442 632L443 652L436 652Z" fill="#dedede" />
    <path d="M266 543L284 558L286 585L266 570Z" fill="#a6a6a6" stroke="#fff" strokeWidth="3.500" />
    <path d="M268 547L284 580" stroke="#fff" strokeWidth="1.300" />
    <g fill="#d6d6d6" stroke="#fff" strokeWidth="2">
      <path d="M657 546L664 533L674 530L680 543Z" />
      <path d="M674 524Q678 518 686 521Q692 530 691 543L680 544Q682 530 674 524Z" />
      <path d="M668 534L688 538M672 540L690 530M660 544L676 535" />
      <path d="M753 538L776 530L778 542L755 549ZM755 545L776 536" />
      <path d="M909 490L933 481L936 492L911 500ZM911 497L935 486" />
    </g>

    {/* selected faces */}
    <path d="M537 354L551 346L770 284L863 260L880 262L943 294L930 292L868 266L840 275L628 331L552 350L545 356Z" fill="#f00" />
    <path d="M302 504L284 512L267 526L263 537L270 530L288 517L303 511Z" fill="#f00" />
    <g fill="none" stroke="#fb0000" strokeWidth="1.600">
      {redWires.map((d, i) => (
        <path key={i} d={d} />
      ))}
    </g>
    <path d="M560 346L770 286L850 266M640 323L830 272M870 268L905 284M850 270L900 288" stroke="#7c0000" strokeWidth="0.700" strokeDasharray="3 3" fill="none" />

    {/* axes */}
    <path d="M212.500 688V573" stroke="#1515b8" strokeWidth="1.600" />
    <path d="M212 688L313 661" stroke="#10a010" strokeWidth="1.500" />
    <path d="M212 688L281 727" stroke="#e01212" strokeWidth="1.500" />
    <g fontFamily="DejaVu Sans, sans-serif" fontSize="10" fontWeight="bold">
      <text x="212" y="573" fill="#1515b8">z</text>
      <text x="281" y="728" fill="#e01212">x</text>
    </g>
  </svg>
);

/* ---------- windows ---------- */

const CloseDot = () => <button aria-label="Close" className="h-3 w-3 rounded-full border border-[#cfcfcf] bg-[#dcdcdc]" />;

const ToolButton = ({ label, children, className, flyout = false }) => (
  <button aria-label={label} title={label} className={className}>
    <svg viewBox="0 0 34 34" className="h-full w-full">
      {children}
      {flyout && <path d="M35 26V33H28Z" fill="#666" />}
    </svg>
  </button>
);

const TextToolButton = ({ label, children }) => (
  <button aria-label={label} title={label} className="flex h-[26px] items-end">
    <span className="w-[22px] pl-[5px] text-left font-['Liberation_Serif',serif] text-[24px] leading-[26px] text-[#141414]">{children}</span>
    <svg viewBox="0 0 6 6" className="mb-px h-[5px] w-[5px]">
      <path d="M6 0V6H0Z" fill="#666" />
    </svg>
  </button>
);

const Palette = ({ tools, label, place, bar, cell }) => (
  <section aria-label={label} className={`absolute bg-[#ececec] shadow-[0_3px_10px_rgba(0,0,0,0.4)] ${place}`}>
    <div className={`flex items-center border-b border-[#cfcfcf] bg-[#f6f6f6] pl-[5px] ${bar}`}>
      <CloseDot />
    </div>
    <div className="flex">
      {tools.map((tool, i) =>
        tool ? (
          <ToolButton key={i} label={tool[0]} className={`shrink-0 ${cell}`}>
            {tool[1]}
          </ToolButton>
        ) : (
          <span key={i} className={`shrink-0 ${cell}`} />
        )
      )}
    </div>
  </section>
);

const Separator = () => <hr className="mx-px my-[2px] h-px border-0 bg-[#b5b5b5]" />;

const MainPalette = () => (
  <section aria-label="Tools" className="absolute left-2 top-0 w-[57px] bg-[#ececec] pb-px shadow-[0_4px_14px_rgba(0,0,0,0.55)]">
    <div className="flex h-4 items-center bg-[#f6f6f6] pl-[5px]">
      <CloseDot />
    </div>
    <div className="mx-px flex h-[26px] flex-col bg-linear-to-r from-[#4b96d2] to-[#1c61ab] px-px font-['DejaVu_Sans',sans-serif] font-bold leading-[13px]">
      <div className="flex justify-between text-[12px] text-white">
        <span className="text-[#a9d0ef]">2D</span>
        <span>3D</span>
      </div>
      <span className="text-[14px] text-[#5ba3da]">Shark</span>
    </div>
    <div className="mt-px flex h-[26px] pb-[2px]">
      <ToolButton label="Select" className="ml-px w-6 bg-[#7db4e6]">
        <Pointer x={9} y={4} />
      </ToolButton>
      <ToolButton label="Direct select" className="ml-[3px] w-7" flyout>
        <Pointer x={10} y={4} fill="#f4f4f4" />
      </ToolButton>
    </div>
    {paletteGroups.map((group, i) => (
      <div key={i}>
        <Separator />
        <div className="grid grid-cols-[28px_28px]">
          {group.map(([label, icon]) =>
            typeof icon === "string" ? (
              <TextToolButton key={label} label={label}>
                {icon}
              </TextToolButton>
            ) : (
              <ToolButton key={label} label={label} className="h-[26px]" flyout>
                {icon}
              </ToolButton>
            )
          )}
        </div>
      </div>
    ))}
    <Separator />
    <div className="grid grid-cols-3">
      {shadeModes.map(([label, icon]) => (
        <ToolButton key={label} label={label} className={label === "Shaded" ? "h-[21px] bg-[#7db4e6]" : "h-[21px]"}>
          {icon}
        </ToolButton>
      ))}
    </div>
  </section>
);

const ErrorDialog = () => (
  <div
    role="alertdialog"
    aria-labelledby="dialog-title"
    className="absolute left-[301px] top-[398px] flex h-[142px] w-[297px] flex-col rounded-t-[5px] bg-[#ebebeb] shadow-[0_12px_36px_rgba(0,0,0,0.6),0_0_1px_rgba(0,0,0,0.5)]"
  >
    <h2
      id="dialog-title"
      className="h-[22px] rounded-t-[5px] border-b border-[#b4b4b4] bg-linear-to-b from-[#e9e9e9] to-[#d2d2d2] text-center font-['Inter',sans-serif] text-[13px] leading-[22px] text-[#4a4a4a]"
    >
      Convert Error
    </h2>
    <p className="flex-1 px-3 pt-3 font-['Roboto',sans-serif] text-[11px] leading-5 text-black">Unable to convert model.</p>
    <button className="mx-auto mb-[6px] h-[21px] w-[73px] rounded border border-[#2a7fe0] bg-linear-to-b from-[#6ab2fa] to-[#0f7bff] pb-px font-['Roboto',sans-serif] text-[11px] leading-none text-white">
      OK
    </button>
  </div>
);

const coords = [
  ["X", "text-[#e8141c]"],
  ["Y", "text-[#0f9a1c]"],
  ["Z", "text-[#1414d0]"],
];

const StatusBar = () => (
  <header className="flex h-[72px] bg-[#ebebeb] font-['Open_Sans',sans-serif] text-[12px] text-black">
    <p className="w-[495px] pl-[74px] pt-12 leading-5">Select objects</p>
    <div className="w-6 border-x border-[#666] pt-[45px] text-center text-[16px] font-bold italic leading-5 text-[#666]">?</div>
    <div className="flex-1" />
    <div className="flex w-[25px] flex-col items-center justify-between border-x border-[#666] pb-1 pt-[6px] text-[#666]">
      <svg width="16" height="16" viewBox="0 0 16 16" fill="none" stroke="currentColor" strokeWidth="1.500">
        <circle cx="8" cy="8" r="6.500" />
        <path d="M8 1V6M8 10V15M1 8H6M10 8H15M7.500 8H8.500" strokeWidth="1" />
      </svg>
      <span className="font-['Open_Sans',sans-serif] text-[16px] font-bold italic leading-6">i</span>
    </div>
    <dl className="w-[155px] pl-[13px] pt-[7px] text-[13px] leading-5">
      {coords.map(([axis, color]) => (
        <div key={axis} className="flex">
          <dt className={`w-[29px] font-bold ${color}`}>{axis} =</dt>
          <dd>0.0 mm</dd>
        </div>
      ))}
    </dl>
  </header>
);

export default function App() {
  return (
    <main className="relative flex min-h-screen flex-col overflow-hidden bg-[#75829a]">
      <StatusBar />

      {/* Document window */}
      <div className="flex flex-1">
        <div className="w-[30px] shrink-0 bg-linear-to-r from-[#76839a] to-[#626d80]" />
        <div className="w-[25px] shrink-0 bg-linear-to-r from-[#f6f6f6] to-[#cfcfcf]" />
        <section className="flex min-w-0 flex-1 flex-col overflow-hidden bg-white">
          <div className="flex h-[23px] items-center gap-2 border-y border-[#c8c8c8] bg-[#f6f6f6] pl-2 pr-[41px]">
            <span className="flex h-3 w-3 items-center justify-center rounded-full bg-[#dcdcdc]">
              <span className="h-1 w-1 rounded-full bg-[#777]" />
            </span>
            <CloseDot />
            <CloseDot />
            <h1 className="ml-auto font-['Inter',sans-serif] text-[13px] text-[#b0b0b0]">Untitled 1*--Trimetric</h1>
          </div>
          <CarModel />
        </section>
      </div>

      {/* Floating palettes */}
      <Palette tools={drawTools} label="Drawing" place="left-[90px] top-[101px]" bar="h-[17px]" cell="h-[34px] w-[34px]" />
      <Palette tools={solidTools} label="Solids" place="left-[103px] top-[180px]" bar="h-4" cell="h-[26px] w-[26px]" />
      <Palette tools={viewTools} label="Visibility" place="left-[815px] top-[116px]" bar="h-[17px]" cell="h-[34px] w-[34px]" />
      <Palette tools={editTools} label="Editing" place="-left-[9px] top-0" bar="h-[15px]" cell="h-[34px] w-[34px]" />
      <MainPalette />

      <ErrorDialog />
    </main>
  );
}
